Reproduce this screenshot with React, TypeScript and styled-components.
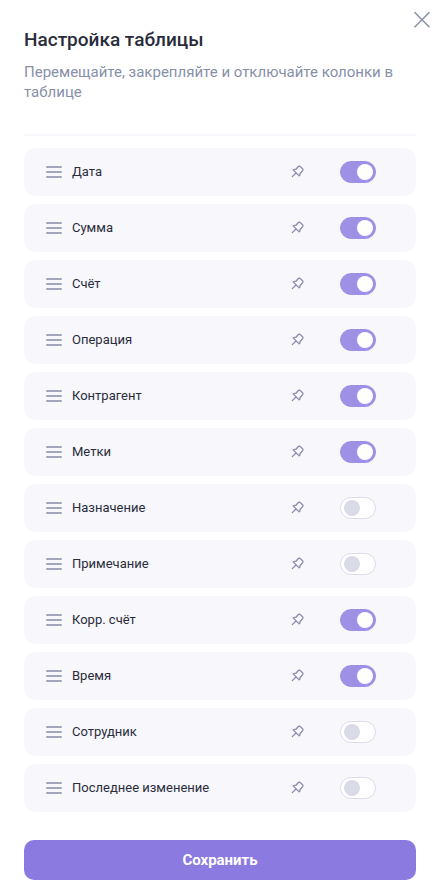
import React, { useState } from "react";
import styled, { createGlobalStyle } from "styled-components";

const GlobalStyle = createGlobalStyle`
  *, *::before, *::after { box-sizing: border-box; }
  body {
    margin: 0;
    background: #ffffff;
    color: #2a2c3b;
    font-family: Roboto, "Liberation Sans", sans-serif;
  }
`;

const Panel = styled.form`
  position: relative;
  display: flex;
  flex-direction: column;
  padding: 28px 32px 15px 24px;
`;

const CloseButton = styled.button`
  position: absolute;
  top: 8px;
  right: 14px;
  display: flex;
  padding: 4px;
  border: 0;
  background: none;
  color: #8b90ac;
  cursor: pointer;
`;

const Header = styled.header`
  padding-bottom: 32px;
  border-bottom: 2px solid #f7f7fc;
`;

const Title = styled.h1`
  margin: 0;
  font-size: 19px;
  line-height: 24px;
  font-weight: 500;
`;

const Subtitle = styled.p`
  margin: 10px 0 0;
  color: #888fa9;
  font-size: 15px;
  line-height: 20px;
`;

const ColumnList = styled.ul`
  display: flex;
  flex-direction: column;
  gap: 8px;
  margin: 12px 0 28px;
  padding: 0;
  list-style: none;
`;

const ColumnRow = styled.li`
  display: flex;
  align-items: center;
  height: 48px;
  padding: 0 40px 0 20px;
  border-radius: 12px;
  background: #f7f7fc;
`;

const IconButton = styled.button`
  display: flex;
  flex: none;
  padding: 2px;
  border: 0;
  background: none;
  color: #858ba8;
  cursor: pointer;
`;

const DragButton = styled(IconButton)`
  color: #a2a5bd;
  cursor: grab;
`;

const ColumnName = styled.label`
  flex: 1;
  padding-left: 8px;
  font-size: 13px;
  line-height: 20px;
`;

const Toggle = styled.input`
  appearance: none;
  display: flex;
  align-items: center;
  flex: none;
  width: 36px;
  height: 22px;
  margin: 0 0 0 33px;
  padding: 0 3px;
  border: 1px solid #dcdceb;
  border-radius: 11px;
  background: #ffffff;
  cursor: pointer;

  &::before {
    content: "";
    width: 16px;
    height: 16px;
    border-radius: 50%;
    background: #d9dbe8;
  }

  &:checked {
    justify-content: flex-end;
    padding: 0 2px;
    border-color: #9e90e5;
    background: #9e90e5;
  }

  &:checked::before { background: #ffffff; }
`;

const SaveButton = styled.button`
  height: 40px;
  border: 0;
  border-radius: 10px;
  background: #8b7ae0;
  color: #ffffff;
  font-family: inherit;
  font-size: 15px;
  line-height: 20px;
  font-weight: 700;
  cursor: pointer;
`;

const CloseIcon = () => (
  <svg width="16" height="16" viewBox="0 0 16 16" fill="none" stroke="currentColor" strokeWidth="1.5" aria-hidden="true">
    <path d="M.5.2l15 15M15.5.2l-15 15" />
  </svg>
);

const DragIcon = () => (
  <svg width="16" height="12" viewBox="0 0 16 12" fill="none" stroke="currentColor" strokeWidth="2" strokeLinecap="round" aria-hidden="true">
    <path d="M1 1h14M1 6h14M1 11h14" />
  </svg>
);

const PinIcon = () => (
  <svg width="14" height="14" viewBox="0 0 14 14" fill="none" stroke="currentColor" strokeWidth="1.3" strokeLinecap="round" strokeLinejoin="round" aria-hidden="true">
    <path d="M7.4 1.5Q8.2.9 9.1 1.4L11.7 4Q12.3 4.8 11.7 5.6L9.2 8.3Q9.2 9.8 8.2 10.9L2.3 5.1Q3.4 4.2 4.9 4.2ZM5 8L1.3 11.6" />
  </svg>
);

interface Column {
  id: string;
  name: string;
  visible: boolean;
}

const initialColumns: Column[] = [
  { id: "date", name: "Дата", visible: true },
  { id: "amount", name: "Сумма", visible: true },
  { id: "account", name: "Счёт", visible: true },
  { id: "operation", name: "Операция", visible: true },
  { id: "contractor", name: "Контрагент", visible: true },
  { id: "tags", name: "Метки", visible: true },
  { id: "purpose", name: "Назначение", visible: false },
  { id: "note", name: "Примечание", visible: false },
  { id: "corr-account", name: "Корр. счёт", visible: true },
  { id: "time", name: "Время", visible: true },
  { id: "employee", name: "Сотрудник", visible: false },
  { id: "modified", name: "Последнее изменение", visible: false },
];

export default function App() {
  const [columns, setColumns] = useState(initialColumns);

  const toggleColumn = (id: string) =>
    setColumns((list) => list.map((c) => (c.id === id ? { ...c, visible: !c.visible } : c)));

  return (
    <>
      <GlobalStyle />
      <Panel onSubmit={(event) => event.preventDefault()}>
        <CloseButton type="button" aria-label="Закрыть">
          <CloseIcon />
        </CloseButton>
        <Header>
          <Title>Настройка таблицы</Title>
          <Subtitle>Перемещайте, закрепляйте и отключайте колонки в таблице</Subtitle>
        </Header>
        <ColumnList>
          {columns.map(({ id, name, visible }) => (
            <ColumnRow key={id}>
              <DragButton type="button" aria-label={`Переместить: ${name}`}>
                <DragIcon />
              </DragButton>
              <ColumnName htmlFor={id}>{name}</ColumnName>
              <IconButton type="button" aria-label={`Закрепить: ${name}`}>
                <PinIcon />
              </IconButton>
              <Toggle id={id} type="checkbox" role="switch" checked={visible} onChange={() => toggleColumn(id)} />
            </ColumnRow>
          ))}
        </ColumnList>
        <SaveButton type="submit">Сохранить</SaveButton>
      </Panel>
    </>
  );
}
